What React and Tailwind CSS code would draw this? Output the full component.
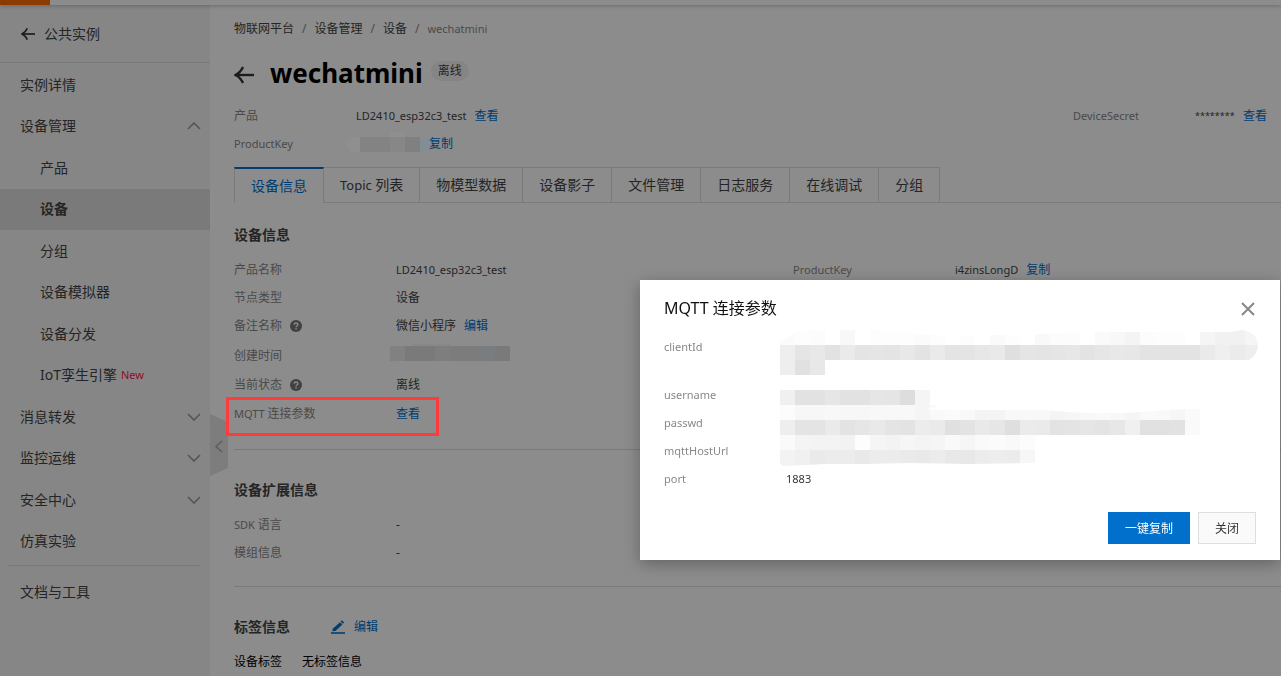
import React from "react";

const NAV = [
  { label: "实例详情" },
  { label: "设备管理", chevron: "up" },
  { label: "产品", child: true },
  { label: "设备", child: true, active: true },
  { label: "分组", child: true },
  { label: "设备模拟器", child: true },
  { label: "设备分发", child: true },
  { label: "孪生引擎", latin: "IoT", child: true, isNew: true },
  { label: "消息转发", chevron: "down" },
  { label: "监控运维", chevron: "down" },
  { label: "安全中心", chevron: "down" },
  { label: "仿真实验" },
];

const TABS = ["设备信息", "列表", "物模型数据", "设备影子", "文件管理", "日志服务", "在线调试", "分组"];

// Grey levels of the redacted values, one row of 15px cells per entry.
const REDACTED = [
  { y: 0, cells: "fb fd fc ff f8 ff fd fd fd fb fd ff fd ff fa fd ff f9 fc fc ff fa f8 f4 fc fd fd ff f5 f1 f1 f5" },
  { y: 15, cells: "ee e5 e8 e2 ea e4 e5 e4 e8 e3 ea e4 e4 e7 e9 df e5 e4 e5 e7 e3 e6 e8 e7 e3 e3 e3 e3 ea ef eb ee" },
  { y: 30, cells: "ee e1 e8" },
  { y: 60, cells: "f0 e2 e2 e6 e2 e2 e6 e5 dd f5" },
  { y: 75, cells: "fc f7 f7 f8 f7 f7 f8 f8 f8 f5 f9 fb f9 f4 f4 f8 f8 f8 f4 f6 f8 f9 f8 f5 fa f9 f6 fa" },
  { y: 90, cells: "ee e4 e4 ea e3 e6 e9 e4 e3 ec ea e0 e3 e9 e6 df eb ea e3 e4 e6 e4 e7 f0 e1 e1 e2 fa" },
  { y: 105, cells: "fa f4 f3 f3 f2 fd f5 f3 f6 f4 f5 f9 f6 fa fb f9 fc" },
  { y: 120, cells: "f3 f0 ea ec ec e9 ec ec ea e9 ec e8 e8 ec ed ec f7" },
];

function Redacted() {
  return (
    <svg width="478" height="136" viewBox="0 0 478 136" className="absolute left-[140px] top-[50px]" aria-hidden="true">
      <clipPath id="smear">
        <path d="M0 13 L16 1 L75 0 L92 0 L150 5 H255 L272 3 L320 2 H450 L463 0 Q478 4 478 15 Q477 26 469 30 H45 V45 H0 Z M0 60 H150 V75 L158 75 L154 78 L146 79 L153 80 L260 80 L305 83 H345 L405 79 H420 V105 H255 V133 L190 134 L130 133 L83 134 L46 134 L3 136 L0 133 Z" />
      </clipPath>
      <g clipPath="url(#smear)" shapeRendering="crispEdges">
        {REDACTED.map((row) =>
          row.cells.split(" ").map((c, i) => (
            <rect key={`${row.y}-${i}`} x={i * 15} y={row.y} width="15" height={row.y === 120 ? 16 : 15} fill={`#${c}${c}${c}`} />
          ))
        )}
      </g>
    </svg>
  );
}

function Chevron({ dir }) {
  return (
    <svg width="14" height="8" viewBox="0 0 14 8" fill="none" stroke="#999" strokeWidth="1.6" aria-hidden="true">
      <path d={dir === "up" ? "M1 7 L7 1 L13 7" : "M1 1 L7 7 L13 1"} />
    </svg>
  );
}

function BackArrow({ size }) {
  return (
    <svg width={size} height={size} viewBox="0 0 20 20" fill="none" stroke="#333" strokeWidth="2.4" aria-hidden="true">
      <path d="M1.5 10 H20" />
      <path d="M9 2 Q6.500 7.500 1.500 10 Q6.500 12.500 9 18" />
    </svg>
  );
}

function Help() {
  return (
    <svg width="12" height="12" viewBox="0 0 12 12" className="ml-2" aria-hidden="true">
      <circle cx="6" cy="6" r="6" fill="#777" />
      <path d="M4.100 4.700 Q4.200 3 6 3 Q7.900 3 7.900 4.600 Q7.900 5.500 6.900 6 Q6.050 6.450 6.050 7.300" fill="none" stroke="#fff" strokeWidth="1.300" />
      <rect x="5.350" y="8.100" width="1.400" height="1.400" fill="#fff" />
    </svg>
  );
}

function Link({ children, className = "" }) {
  return (
    <a href="#" className={`text-xs text-[#0070cc] ${className}`}>
      {children}
    </a>
  );
}

const LABEL = "flex items-center text-[#888]";

export default function App() {
  return (
    <div className="flex min-h-screen flex-col bg-white font-['Noto_Sans','Noto_Sans_CJK_SC',sans-serif] text-xs text-[#444]">
      <header className="relative z-[1] h-[5px] bg-white shadow-[0_1px_4px_rgba(0,0,0,0.25)]">
        <div className="h-full w-[50px] bg-[#ff6a00]" />
      </header>

      <div className="flex flex-1">
        <aside className="relative w-[210px] shrink-0 bg-[#f5f5f5]">
          <a href="#" className="flex h-[58px] items-center gap-[9px] border-b border-[#dedede] pl-[21px] text-sm">
            <BackArrow size={14} />
            公共实例
          </a>
          <nav className="mt-px">
            <ul className="grid h-[498px] auto-rows-fr">
              {NAV.map((n) => (
                <li key={n.label} className={n.active ? "bg-[#dedede] font-bold" : ""}>
                  <a href="#" className={`flex h-full items-center pr-[9px] text-sm ${n.child ? "pl-10" : "pl-5"}`}>
                    {n.latin}
                    {n.label}
                    {n.isNew && <span className="ml-1 text-[11px] text-[#ff1a40]">New</span>}
                    {n.chevron && (
                      <span className="ml-auto">
                        <Chevron dir={n.chevron} />
                      </span>
                    )}
                  </a>
                </li>
              ))}
            </ul>
            <hr className="ml-2 mr-[10px] mt-[3px] border-[#dedede]" />
            <a href="#" className="mt-[5px] flex h-[42px] items-center pl-5 text-sm">
              文档与工具
            </a>
          </nav>
          <button type="button" aria-label="收起导航" className="absolute left-full top-[409px]">
            <svg width="18" height="62" viewBox="0 0 18 62" aria-hidden="true">
              <path d="M0 0 L18 8 V54 L0 62 Z" fill="#e3e3e3" />
              <path d="M12 27 L6 32.500 L12 38" fill="none" stroke="#aaa" strokeWidth="1.600" />
            </svg>
          </button>
        </aside>

        <main className="min-w-0 flex-1 pl-6">
          <nav className="mt-[14px] flex h-5 items-center gap-2">
            <a href="#">物联网平台</a>
            <span className="text-[#888]">/</span>
            <a href="#">设备管理</a>
            <span className="text-[#888]">/</span>
            <a href="#">设备</a>
            <span className="text-[#888]">/</span>
            <span className="text-[11px] text-[#888]">wechatmini</span>
          </nav>

          <div className="mt-[14px] flex h-10 items-center">
            <a href="#" aria-label="返回" className="mt-1">
              <BackArrow size={20} />
            </a>
            <h1 className="ml-4 text-[26px] font-bold text-black">wechatmini</h1>
            <span className="-mt-1 ml-2 flex h-5 items-center rounded-full bg-[#f2f2f2] px-[7px]">离线</span>
          </div>

          <div className="mt-[9px] flex h-7 items-center">
            <span className="w-[122px] text-[#888]">产品</span>
            <span className="text-[11px]">LD2410_esp32c3_test</span>
            <Link className="ml-2">查看</Link>
            <div className="ml-auto flex items-center pr-[14px]">
              <span className="w-[122px] text-[11px] text-[#888]">DeviceSecret</span>
              <span className="w-10 text-[9px]">********</span>
              <Link className="ml-2">查看</Link>
            </div>
          </div>
          <div className="flex h-7 items-center">
            <span className="w-[112px] text-[11px] text-[#888]">ProductKey</span>
            <svg width="83" height="20" viewBox="0 0 83 20" className="relative z-20 -mt-1" aria-hidden="true">
              <path d="M8 5 H14 V20 H8 Q0 18 0 12 Q1 6 8 5 Z" fill="#8f8f8f" />
              <rect x="14" y="5" width="30" height="15" fill="#838383" />
              <rect x="44" y="0" width="15" height="5" fill="#8f8f8f" />
              <rect x="44" y="5" width="15" height="15" fill="#878787" />
              <rect x="59" y="5" width="15" height="15" fill="#808080" />
              <path d="M74 5 H83 V9 Q82 18 76 20 H74 Z" fill="#838d98" />
              <rect x="60" y="20" width="5" height="1" fill="#333" />
            </svg>
            <Link>复制</Link>
          </div>

          <div role="tablist" className="mt-[9px] flex h-9 border-b border-[#dedede]">
            {TABS.map((t, i) => (
              <button
                key={t}
                type="button"
                role="tab"
                aria-selected={i === 0}
                className={
                  i === 0
                    ? "-mb-px border-x border-t-2 border-x-[#dedede] border-t-[#0070cc] bg-white px-4 text-sm text-[#0070cc]"
                    : "border-r border-t border-[#dedede] px-4 text-sm"
                }
              >
                {i === 1 && <span className="text-[13px]">Topic </span>}
                {t}
              </button>
            ))}
          </div>

          <section className="border-b border-[#dedede] pb-5">
            <h2 className="mt-[22px] h-5 text-sm font-bold leading-5">设备信息</h2>
            <dl className="mt-[11px] grid grid-cols-[162px_397px_162px_1fr] grid-rows-[28px_28px_28px_31px_28px_30px] items-center">
              <dt className={LABEL}>产品名称</dt>
              <dd className="text-[11px]">LD2410_esp32c3_test</dd>
              <dt className="text-[11px] text-[#888]">ProductKey</dt>
              <dd className="flex items-center gap-2 text-[11px]">
                i4zinsLongD <Link>复制</Link>
              </dd>
              <dt className={LABEL}>节点类型</dt>
              <dd className="col-span-3">设备</dd>
              <dt className={LABEL}>
                备注名称 <Help />
              </dt>
              <dd className="col-span-3 flex items-center gap-2">
                微信小程序 <Link>编辑</Link>
              </dd>
              <dt className={LABEL}>创建时间</dt>
              <dd className="col-span-3">
                <svg width="120" height="17" viewBox="0 0 120 17" className="relative z-20 -ml-[6px] -mt-[6px]" aria-hidden="true">
                  <rect x="22" y="0" width="38" height="2" fill="#888" />
                  <rect x="0" y="2" width="15" height="15" fill="#818181" />
                  <rect x="15" y="2" width="30" height="15" fill="#7a7a7a" />
                  <rect x="45" y="2" width="15" height="15" fill="#7e7e7e" />
                  <rect x="60" y="2" width="30" height="15" fill="#7c7c7c" />
                  <rect x="90" y="2" width="15" height="15" fill="#7a7d80" />
                  <rect x="105" y="2" width="15" height="15" fill="#7a7a7a" />
                </svg>
              </dd>
              <dt className={LABEL}>
                当前状态 <Help />
              </dt>
              <dd className="col-span-3">离线</dd>
              <dt className={`relative ${LABEL}`}>
                <span className="text-[11px]">MQTT&nbsp;</span>连接参数
                <span className="absolute -left-2 -top-[9px] z-20 h-[39px] w-[213px] border-3 border-[#ff3b3b]" />
              </dt>
              <dd className="col-span-3">
                <Link>查看</Link>
              </dd>
            </dl>
          </section>

          <section className="border-b border-[#dedede] pb-[19px]">
            <h2 className="mt-[30px] h-5 text-sm font-bold leading-5">设备扩展信息</h2>
            <dl className="mt-[11px] grid auto-rows-[28px] grid-cols-[162px_1fr] items-center">
              <dt className={LABEL}>
                <span className="text-[11px]">SDK&nbsp;</span>语言
              </dt>
              <dd>-</dd>
              <dt className={LABEL}>模组信息</dt>
              <dd>-</dd>
            </dl>
          </section>

          <section>
            <div className="mt-[30px] flex h-5 items-center">
              <h2 className="text-sm font-bold leading-5">标签信息</h2>
              <a href="#" className="ml-[41px] flex items-center gap-[9px] text-[#0070cc]">
                <svg width="14" height="14" viewBox="0 0 14 14" fill="#0070cc" aria-hidden="true">
                  <path d="M10.800 0.300 L13.200 2.500 L12 3.800 L9.600 1.600 Z" />
                  <path d="M9 2.200 L11.400 4.400 L4.500 11 L1.300 11.200 L1.700 8.800 Z" />
                  <rect x="0" y="12.200" width="14" height="1.600" />
                </svg>
                编辑
              </a>
            </div>
            <div className="mt-[15px] flex h-5 items-center gap-5 text-black">
              <span>设备标签</span>
              <span>无标签信息</span>
            </div>
          </section>
        </main>
      </div>

      <div className="fixed inset-0 z-10 bg-black/45" />

      <div
        role="dialog"
        aria-labelledby="dialog-title"
        className="fixed right-px top-[280px] z-30 flex h-[280px] w-[640px] flex-col bg-white px-6 pb-4 pt-4 shadow-[0_4px_16px_rgba(0,0,0,0.3)]"
      >
        <div className="flex h-6 items-center justify-between">
          <h2 id="dialog-title" className="text-base leading-6 text-[#111]">
            MQTT 连接参数
          </h2>
          <button type="button" aria-label="关闭对话框" className="pr-px pt-[2px]">
            <svg width="14" height="14" viewBox="0 0 14 14" stroke="#888" strokeWidth="2" aria-hidden="true">
              <path d="M1 1 L13 13 M13 1 L1 13" />
            </svg>
          </button>
        </div>
        <Redacted />
        <dl className="mt-[13px] grid grid-cols-[122px_1fr] grid-rows-[48px_28px_28px_28px_28px] text-[11px] leading-7 text-[#888]">
          <dt>clientId</dt>
          <dd />
          <dt>username</dt>
          <dd />
          <dt>passwd</dt>
          <dd />
          <dt>mqttHostUrl</dt>
          <dd />
          <dt>port</dt>
          <dd className="text-[#333]">1883</dd>
        </dl>
        <div className="mt-auto flex justify-end gap-2">
          <button type="button" className="h-8 bg-[#0070cc] px-[17px] pt-px text-xs text-white">
            一键复制
          </button>
          <button type="button" className="h-8 border border-[#dedede] bg-[#fafafa] px-4 pt-px text-xs text-[#333]">
            关闭
          </button>
        </div>
      </div>
    </div>
  );
}
